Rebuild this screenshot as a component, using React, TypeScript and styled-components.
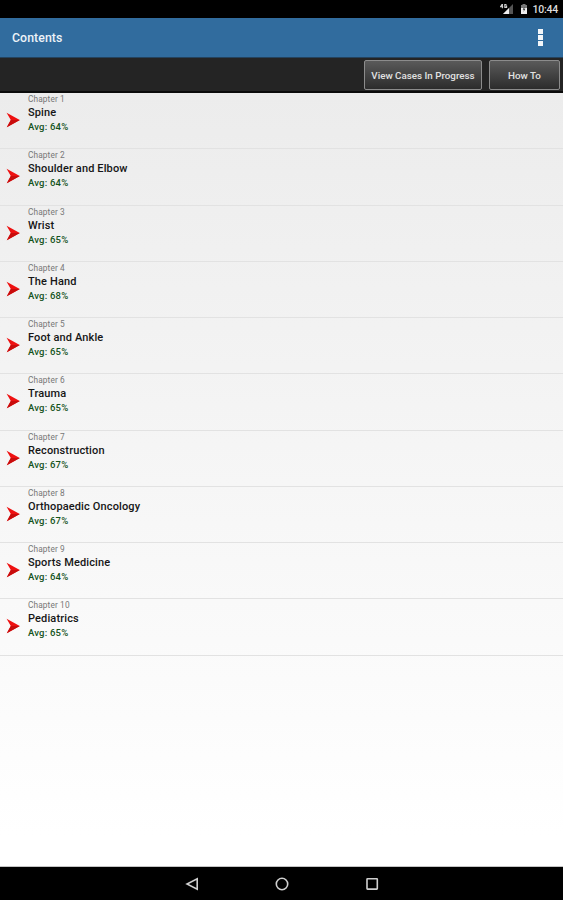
import React from 'react';
import styled, { createGlobalStyle } from 'styled-components';

const GlobalStyle = createGlobalStyle`
  * { box-sizing: border-box; }
  body { margin: 0; background: #fff; font-family: Roboto, "Liberation Sans", sans-serif; }
`;

const Screen = styled.div`
  display: flex;
  flex-direction: column;
  width: 100%;
  height: 900px;
  overflow: hidden;
`;

const StatusBar = styled.header`
  flex: 0 0 18px;
  display: flex;
  align-items: center;
  justify-content: flex-end;
  padding-right: 5px;
  background: #000;
  color: #dedede;
`;

const Clock = styled.span`
  margin-left: 5px;
  padding-top: 1px;
  font-size: 10.5px;
  line-height: 17px;
  font-weight: 500;
  letter-spacing: -0.25px;
`;

const StatusIcon = styled.svg<{ $gap?: number }>`
  display: block;
  margin-left: ${(p) => p.$gap ?? 0}px;
`;

const TitleBar = styled.div`
  flex: 0 0 40px;
  display: flex;
  align-items: center;
  justify-content: space-between;
  padding: 0 19px 0 12px;
  background: #316c9e;
  border-bottom: 1px solid #24435e;
`;

const Title = styled.h1`
  margin: 0;
  padding-top: 1px;
  color: #edf3f8;
  font-size: 12.3px;
  line-height: 18px;
  font-weight: 500;
  letter-spacing: 0.08px;
`;

const Overflow = styled.div`
  display: grid;
  gap: 1px;
  justify-items: center;
  width: 7px;
`;

const Dot = styled.i`
  width: 5px;
  height: 5px;
  background: #f3f6f9;
`;

const Toolbar = styled.div`
  flex: 0 0 34px;
  display: flex;
  justify-content: flex-end;
  gap: 7px;
  padding: 2px 3px 1px;
  background: #242424;
  border-bottom: 2px solid #0b0b0b;
`;

const ToolButton = styled.button<{ $width: number }>`
  width: ${(p) => p.$width}px;
  height: 30px;
  padding: 1px 0 0;
  border: 1px solid #8c8c8c;
  border-radius: 2px;
  background: linear-gradient(#5a5a5a, #2c2c2c);
  color: #e2e2e2;
  font: 500 9.8px Roboto, sans-serif;
  white-space: nowrap;
`;

const Content = styled.main`
  flex: 1;
  background: linear-gradient(#ececec, #fff 96%);
  border-bottom: 1px solid #c4c4c4;
`;

const ChapterRow = styled.article`
  display: flex;
  height: 56.25px;
  padding-left: 6px;
  border-bottom: 1px solid #e2e2e2;
`;

const Arrow = styled.svg`
  flex: none;
  width: 14px;
  height: 16px;
  margin: 19px 8px 0 0;
`;

const ChapterText = styled.div`
  display: flex;
  flex-direction: column;
`;

const ChapterLabel = styled.span`
  height: 13px;
  color: #777;
  font-size: 8.3px;
  line-height: 13px;
  letter-spacing: 0.12px;
`;

const ChapterTitle = styled.span`
  height: 14px;
  color: #161616;
  font-size: 11px;
  line-height: 14px;
  font-weight: 500;
  letter-spacing: 0.13px;
`;

const Average = styled.span`
  height: 14px;
  color: #14531b;
  font-size: 9.5px;
  line-height: 13px;
  font-weight: 500;
  letter-spacing: 0.2px;
`;

const NavBar = styled.nav`
  flex: 0 0 33px;
  display: flex;
  justify-content: center;
  align-items: center;
  gap: 76px;
  background: #000;
`;

const NavIcon = styled.svg`
  width: 14px;
  height: 14px;
  fill: none;
  stroke: #cfcfcf;
  stroke-width: 1.6;
`;

const chapters = [
  { title: 'Spine', average: 64 },
  { title: 'Shoulder and Elbow', average: 64 },
  { title: 'Wrist', average: 65 },
  { title: 'The Hand', average: 68 },
  { title: 'Foot and Ankle', average: 65 },
  { title: 'Trauma', average: 65 },
  { title: 'Reconstruction', average: 67 },
  { title: 'Orthopaedic Oncology', average: 67 },
  { title: 'Sports Medicine', average: 64 },
  { title: 'Pediatrics', average: 65 },
];

export default function App() {
  return (
    <Screen>
      <GlobalStyle />
      <StatusBar>
        <StatusIcon width="14" height="12" viewBox="0 0 14 12">
          <path d="M13 1v10H3z" fill="#555" />
          <path d="M9 5v6H3z" fill="#eee" />
          <path d="M2.4 1v4.2M2.2 1.2.6 3.7h2.6M6.5 1.6H4.8v2.8h1.8V3.1H5.8" fill="none" stroke="#d0d0d0" strokeWidth="1.1" />
        </StatusIcon>
        <StatusIcon $gap={6} width="8" height="12" viewBox="0 0 8 12">
          <path d="M2.5 1h3v1H7v4H1V2h1.5z" fill="#777" />
          <path d="M1 5h6v6H1z" fill="#eee" />
          <path d="M4.5 3.5 2.7 6.7h1.2L3.5 9l1.9-3.3H4.2z" fill="#333" />
        </StatusIcon>
        <Clock>10:44</Clock>
      </StatusBar>
      <TitleBar>
        <Title>Contents</Title>
        <Overflow><Dot /><Dot /><Dot /></Overflow>
      </TitleBar>
      <Toolbar>
        <ToolButton $width={118}>View Cases In Progress</ToolButton>
        <ToolButton $width={71}>How To</ToolButton>
      </Toolbar>
      <Content>
        {chapters.map((chapter, i) => (
          <ChapterRow key={chapter.title}>
            <Arrow viewBox="0 0 14 16">
              <path d="M.6 .8 13.8 8 .8 15.2 4.8 8z" fill="#ee1111" />
              <path d="M13.8 8 .8 15.2 4.8 8z" fill="#c80c0c" />
            </Arrow>
            <ChapterText>
              <ChapterLabel>Chapter {i + 1}</ChapterLabel>
              <ChapterTitle>{chapter.title}</ChapterTitle>
              <Average>Avg: {chapter.average}%</Average>
            </ChapterText>
          </ChapterRow>
        ))}
      </Content>
      <NavBar>
        <NavIcon viewBox="0 0 14 14"><path d="M12.2 1.7v10.6L2 7z" /></NavIcon>
        <NavIcon viewBox="0 0 14 14"><circle cx="7" cy="7" r="5.7" /></NavIcon>
        <NavIcon viewBox="0 0 14 14"><rect x="2" y="1.8" width="10.3" height="10.3" rx="0.5" /></NavIcon>
      </NavBar>
    </Screen>
  );
}
